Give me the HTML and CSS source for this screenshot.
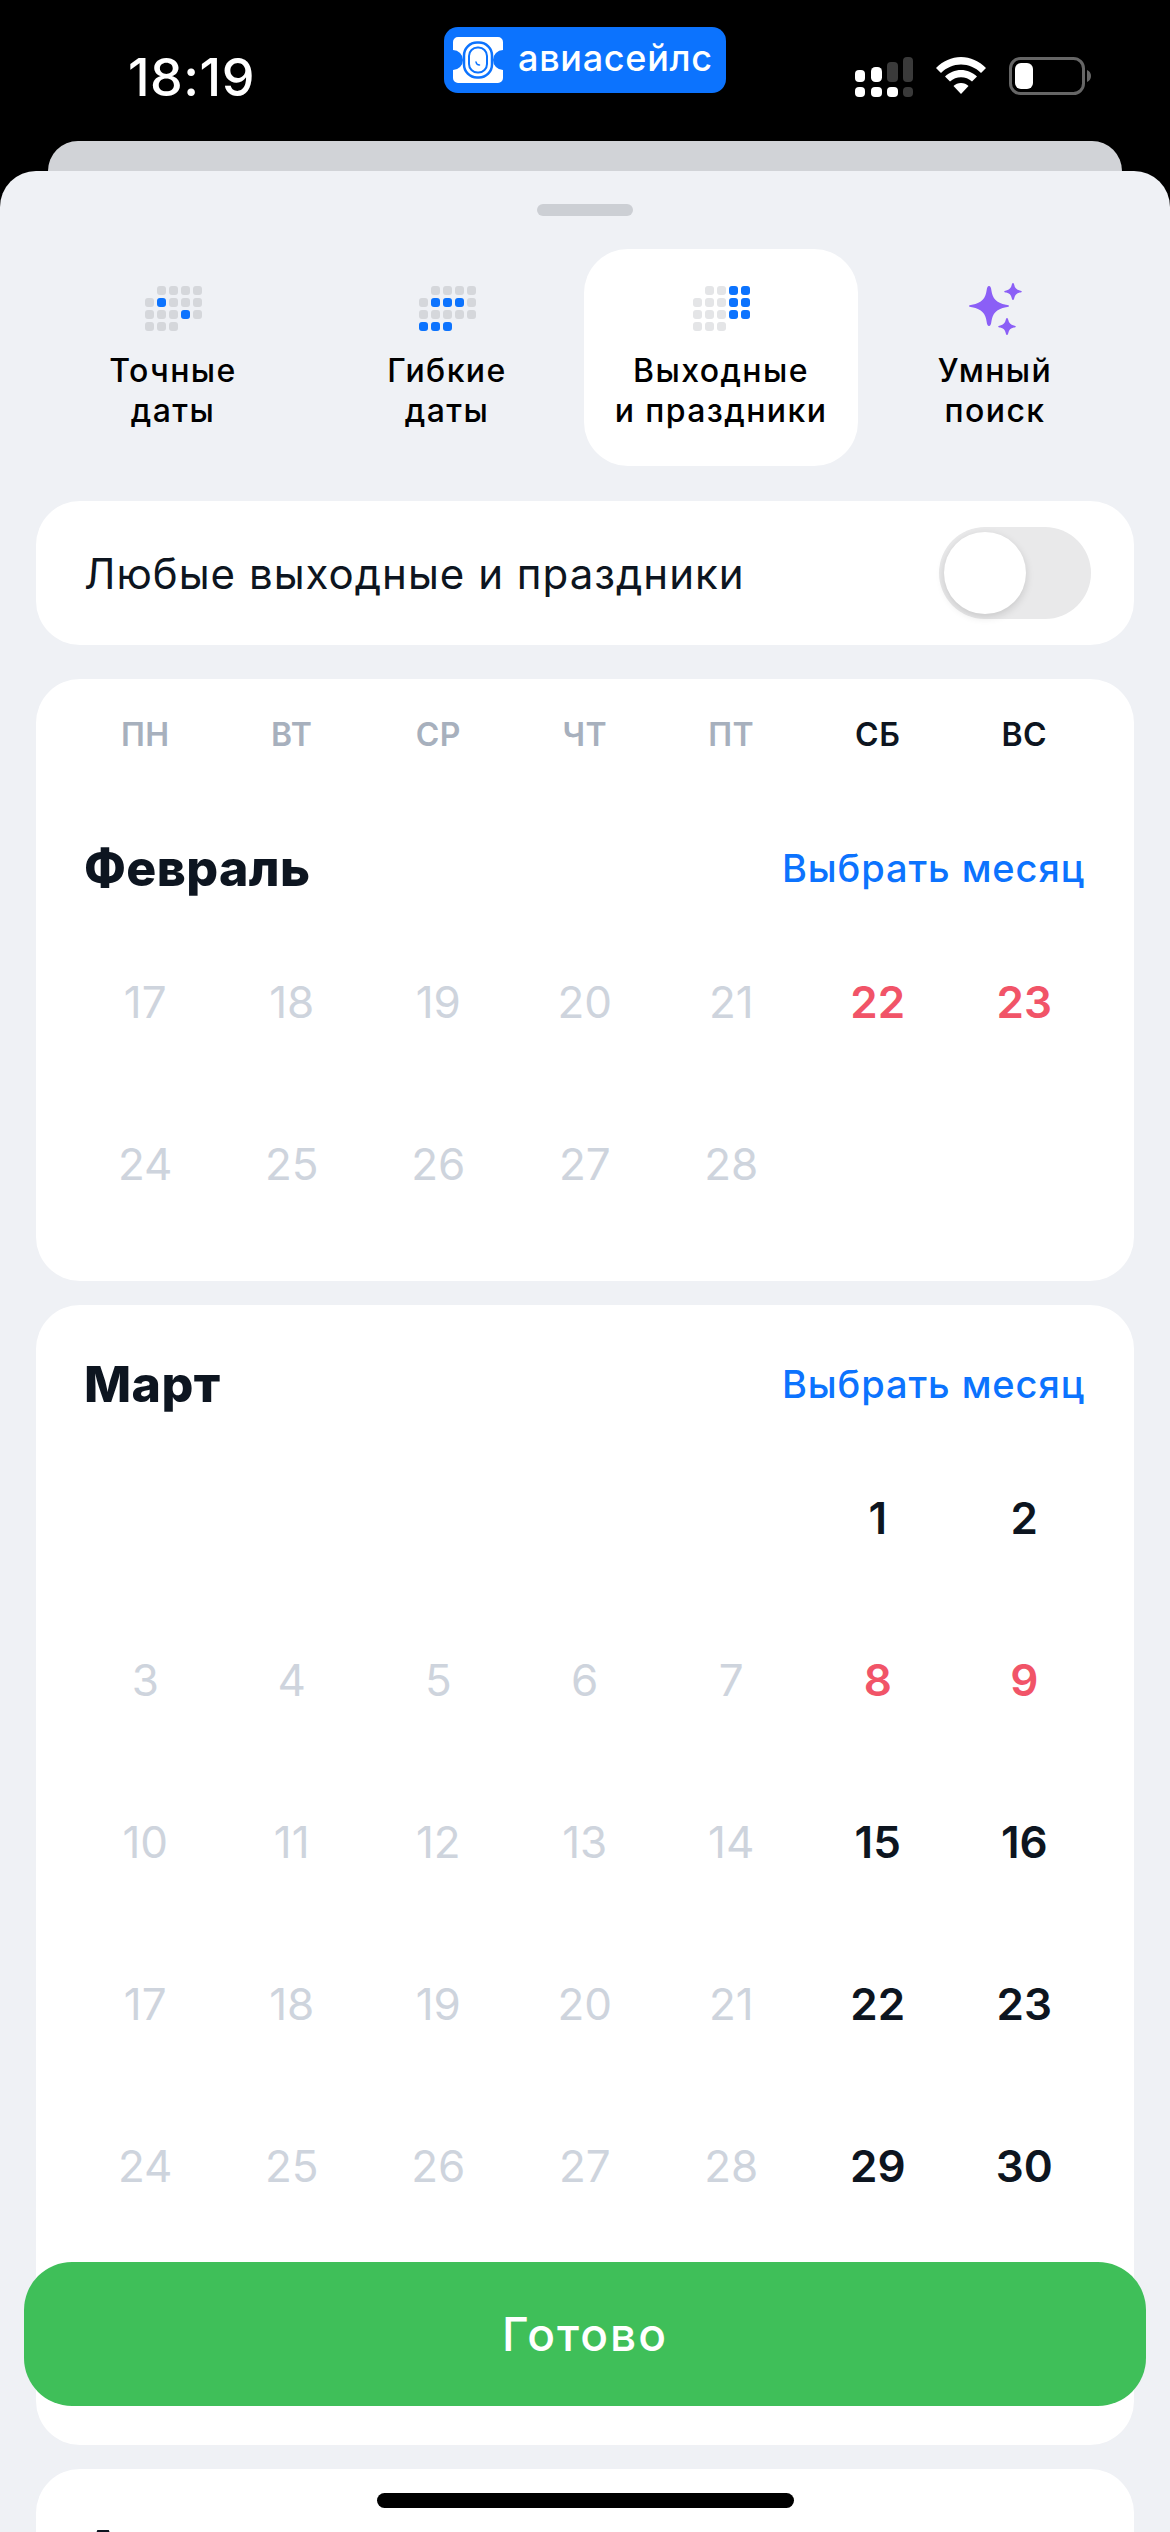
FILE: index.html
```html
<!DOCTYPE html>
<html lang="ru">

<head>
    <meta charset="UTF-8">
    <meta name="viewport" content="width=device-width, initial-scale=1.0">
    <title>Даты</title>
    <link rel="stylesheet" href="styles.css">
</head>

<body>
    <div class="phone">

        <!-- Статус-бар -->
        <div class="status-bar">
            <span class="clock">18:19</span>
            <div class="brand">
                <svg class="brand-logo" viewBox="0 0 50 46" width="50" height="46">
                    <path fill="#fff" d="M5 0H45a5 5 0 0 1 5 5V13a10 10 0 0 0 0 20V41a5 5 0 0 1-5 5H5a5 5 0 0 1-5-5V33a10 10 0 0 0 0-20V5a5 5 0 0 1 5-5Z" />
                    <rect x="11" y="5.500" width="28" height="35" rx="13" fill="none" stroke="#0c73fe" stroke-width="2.500" />
                    <rect x="16" y="10.500" width="18" height="25" rx="8.500" fill="none" stroke="#0c73fe" stroke-width="2" />
                    <path d="M23 25c.3 2 1.500 3 3.500 3" fill="none" stroke="#0c73fe" stroke-width="1.500" stroke-linecap="round" />
                </svg>
                <span class="brand-name">авиасейлс</span>
            </div>
            <div class="status-icons">
                <svg viewBox="0 0 58 40" width="58" height="40">
                    <rect x="0" y="13" width="10" height="12" rx="4" fill="#fff" />
                    <rect x="16" y="10" width="11" height="15" rx="4.500" fill="#fff" />
                    <rect x="32" y="5" width="11" height="20" rx="4" fill="#3a3a3a" />
                    <rect x="48" y="0" width="10" height="25" rx="4" fill="#3a3a3a" />
                    <rect x="0" y="30" width="10" height="10" rx="4" fill="#fff" />
                    <rect x="16" y="30" width="11" height="10" rx="4" fill="#fff" />
                    <rect x="32" y="30" width="11" height="10" rx="4" fill="#fff" />
                    <rect x="48" y="30" width="10" height="10" rx="4" fill="#3a3a3a" />
                </svg>
                <svg viewBox="0 0 50 37" width="50" height="37">
                    <path fill="#fff" d="M25 0C15.500 0 7 4 0 11l5 5c5.500-5.500 12.500-8.500 20-8.500S39.500 10.500 45 16l5-5C43 4 34.500 0 25 0Z" />
                    <path fill="#fff" d="M25 13c-6 0-11.500 2.500-16 6.500l5 5c3-2.800 7-4.300 11-4.300s8 1.500 11 4.300l5-5C36.500 15.500 31 13 25 13Z" />
                    <path fill="#fff" d="M25 26c-3 0-5.500 1-7.500 3L25 37l7.500-8c-2-2-4.500-3-7.500-3Z" />
                </svg>
                <svg viewBox="0 0 82 38" width="82" height="38">
                    <rect x="1.500" y="1.500" width="73" height="35" rx="10" fill="none" stroke="#666" stroke-width="3" />
                    <rect x="6" y="6" width="18" height="26" rx="6" fill="#fff" />
                    <path d="M78 13c2.500 1 4 3.300 4 6s-1.500 5-4 6Z" fill="#666" />
                </svg>
            </div>
        </div>

        <div class="sheet-back"></div>

        <div class="sheet">
            <div class="handle"></div>

            <!-- Вкладки -->
            <div class="tabs">
                <div class="tab">
                    <div class="dots">
                        <i class="none"></i><i></i><i></i><i></i><i></i>
                        <i></i><i class="on"></i><i></i><i></i><i></i>
                        <i></i><i></i><i></i><i class="on"></i><i></i>
                        <i></i><i></i><i></i>
                    </div>
                    <span>Точные<br>даты</span>
                </div>
                <div class="tab">
                    <div class="dots">
                        <i class="none"></i><i></i><i></i><i></i><i></i>
                        <i></i><i class="on"></i><i class="on"></i><i class="on"></i><i></i>
                        <i></i><i></i><i></i><i></i><i></i>
                        <i class="on"></i><i class="on"></i><i class="on"></i>
                    </div>
                    <span>Гибкие<br>даты</span>
                </div>
                <div class="tab active">
                    <div class="dots">
                        <i class="none"></i><i></i><i></i><i class="on"></i><i class="on"></i>
                        <i></i><i></i><i></i><i class="on"></i><i class="on"></i>
                        <i></i><i></i><i></i><i class="on"></i><i class="on"></i>
                        <i></i><i></i><i></i>
                    </div>
                    <span>Выходные<br>и праздники</span>
                </div>
                <div class="tab">
                    <svg class="sparkle" viewBox="0 0 56 48" width="56" height="48">
                        <path fill="#8b5ff6" d="M20 0c1.500 0 2 1.500 2.500 5 1 7 4.500 12 14.500 13.800 2 .4 3 .6 3 1.200s-1 .8-3 1.200C27 23 23.500 28 22.500 35c-.5 3.500-1 5-2.500 5s-2-1.500-2.500-5C16.500 28 13 23 3 21.200 1 20.800 0 20.600 0 20s1-.8 3-1.200C13 17 16.500 12 17.500 5 18 1.500 18.500 0 20 0Z" />
                        <path fill="#8b5ff6" d="M44 -3c.8 0 1 .8 1.300 2 .6 3 2.300 4.800 5.500 5.400 1.200.3 2 .5 2 1.100s-.8.8-2 1.100c-3.200.6-4.900 2.400-5.500 5.400-.3 1.200-.5 2-1.300 2s-1-.8-1.300-2c-.6-3-2.300-4.800-5.500-5.400-1.200-.3-2-.5-2-1.100s.8-.8 2-1.100c3.200-.6 4.900-2.400 5.500-5.400.3-1.200.5-2 1.300-2Z" transform="translate(0 0)" />
                        <path fill="#8b5ff6" d="M38 32c.8 0 1 .8 1.300 2 .6 3 2.300 4.800 5.500 5.400 1.200.3 2 .5 2 1.100s-.8.8-2 1.100c-3.200.6-4.900 2.400-5.500 5.400-.3 1.200-.5 2-1.300 2s-1-.8-1.300-2c-.6-3-2.300-4.800-5.500-5.400-1.200-.3-2-.5-2-1.100s.8-.8 2-1.100c3.200-.6 4.900-2.400 5.500-5.400.3-1.200.5-2 1.300-2Z" />
                    </svg>
                    <span>Умный<br>поиск</span>
                </div>
            </div>

            <!-- Переключатель -->
            <div class="card toggle-card">
                <span>Любые выходные и праздники</span>
                <div class="switch">
                    <div class="knob"></div>
                </div>
            </div>

            <!-- Февраль -->
            <div class="card month">
                <div class="weekdays">
                    <span>ПН</span><span>ВТ</span><span>СР</span><span>ЧТ</span><span>ПТ</span>
                    <span class="weekend">СБ</span><span class="weekend">ВС</span>
                </div>
                <div class="month-head first">
                    <h2>Февраль</h2>
                    <a>Выбрать месяц</a>
                </div>
                <div class="days">
                    <span>17</span><span>18</span><span>19</span><span>20</span><span>21</span>
                    <span class="holiday">22</span><span class="holiday">23</span>
                    <span>24</span><span>25</span><span>26</span><span>27</span><span>28</span>
                </div>
            </div>

            <!-- Март -->
            <div class="card month">
                <div class="month-head">
                    <h2>Март</h2>
                    <a>Выбрать месяц</a>
                </div>
                <div class="days">
                    <span></span><span></span><span></span><span></span><span></span>
                    <span class="free">1</span><span class="free">2</span>
                    <span>3</span><span>4</span><span>5</span><span>6</span><span>7</span>
                    <span class="holiday">8</span><span class="holiday">9</span>
                    <span>10</span><span>11</span><span>12</span><span>13</span><span>14</span>
                    <span class="free">15</span><span class="free">16</span>
                    <span>17</span><span>18</span><span>19</span><span>20</span><span>21</span>
                    <span class="free">22</span><span class="free">23</span>
                    <span>24</span><span>25</span><span>26</span><span>27</span><span>28</span>
                    <span class="free">29</span><span class="free">30</span>
                    <span>31</span>
                </div>
            </div>

            <!-- Апрель -->
            <div class="card month">
                <div class="month-head">
                    <h2>Апрель</h2>
                    <a>Выбрать месяц</a>
                </div>
            </div>
        </div>

        <button class="done">Готово</button>
        <div class="home-bar"></div>
    </div>
</body>

</html>
```

FILE: styles.css
```css
/* Общие стили */
body {
    margin: 0;
    font-family: Inter, "Noto Sans", sans-serif;
    color: #0d1520;
}

.phone {
    position: relative;
    width: 1170px;
    height: 2532px;
    overflow: hidden;
    background-color: #000;
    display: flex;
    flex-direction: column;
}

/* Статус-бар */
.status-bar {
    height: 141px;
    flex-shrink: 0;
    position: relative;
    display: flex;
    justify-content: space-between;
    padding: 0 79px 0 128px;
    box-sizing: border-box;
    color: #fff;
}

.clock {
    font-size: 52px;
    font-weight: 500;
    letter-spacing: 0.5px;
    line-height: 50px;
    margin-top: 53px;
}

.brand {
    position: absolute;
    left: 444px;
    top: 27px;
    width: 282px;
    height: 66px;
    box-sizing: border-box;
    padding-left: 9px;
    display: flex;
    align-items: center;
    gap: 15px;
    background-color: #0c73fe;
    border-radius: 14px;
}

.brand-name {
    font-size: 36px;
    font-weight: 500;
    letter-spacing: 0.7px;
    line-height: 40px;
    margin-top: -4px;
}

.status-icons {
    display: flex;
    align-items: flex-start;
    gap: 23px;
    margin-top: 57px;
}

/* Листы */
.sheet-back {
    height: 30px;
    flex-shrink: 0;
    margin: 0 48px;
    background-color: #d1d3d7;
    border-radius: 36px 36px 0 0;
}

.sheet {
    flex-grow: 1;
    min-height: 0;
    overflow: hidden;
    background-color: #eff1f5;
    border-radius: 36px 36px 0 0;
    padding: 33px 36px 0;
}

.handle {
    width: 96px;
    height: 12px;
    margin: 0 auto 33px;
    background-color: #cccfd4;
    border-radius: 6px;
}

/* Вкладки */
.tabs {
    display: grid;
    grid-template-columns: repeat(4, 274px);
    height: 217px;
    margin-bottom: 35px;
}

.tab {
    display: flex;
    flex-direction: column;
    align-items: center;
    padding-top: 37px;
    border-radius: 44px;
    font-size: 32px;
    font-weight: 500;
    line-height: 40px;
    letter-spacing: 1.4px;
    text-align: center;
    color: #000;
}

.tab.active {
    background-color: #fff;
}

.dots {
    display: grid;
    grid-template-columns: repeat(5, 9px);
    grid-auto-rows: 9px;
    gap: 3px;
    height: 45px;
    margin-bottom: 20px;
}

.dots i {
    background-color: #d5d7db;
    border-radius: 3px;
}

.dots i.none {
    background: none;
}

.active .dots i {
    background-color: #e4e5e7;
}

.dots i.on,
.active .dots i.on {
    background-color: #0c73fe;
}

.active .dots i.none {
    background: none;
}

.sparkle {
    display: block;
    margin: 0 0 17px 3px;
    overflow: visible;
}

/* Карточки */
.card {
    background-color: #fff;
    border-radius: 44px;
    margin-bottom: 24px;
}

.toggle-card {
    height: 144px;
    margin-bottom: 34px;
    box-sizing: border-box;
    padding: 0 43px 0 48px;
    display: flex;
    align-items: center;
    justify-content: space-between;
    font-size: 42px;
    letter-spacing: 1px;
}

.switch {
    width: 152px;
    height: 92px;
    padding: 5px;
    box-sizing: border-box;
    background-color: #e9e9ea;
    border-radius: 46px;
}

.knob {
    width: 82px;
    height: 82px;
    background-color: #fff;
    border-radius: 50%;
    box-shadow: 0 3px 8px rgba(0, 0, 0, 0.14);
}

/* Месяц */
.weekdays,
.days {
    display: grid;
    grid-template-columns: repeat(7, 146.5px);
    padding: 0 36px;
    text-align: center;
}

.weekdays {
    height: 110px;
    align-items: center;
    font-size: 32px;
    font-weight: 600;
    letter-spacing: 0.5px;
    color: #a7b0bd;
}

.weekdays .weekend {
    color: #0d1520;
}

.month-head {
    height: 106px;
    padding: 26px 49px 0 48px;
    display: flex;
    align-items: center;
    justify-content: space-between;
}

.month-head.first {
    padding-top: 0;
    margin-top: 26px;
}

.month-head h2 {
    margin: 0;
    font-size: 50px;
    font-weight: 800;
    letter-spacing: 0.4px;
}

.month-head a {
    font-size: 38px;
    font-weight: 500;
    letter-spacing: 0.9px;
    color: #0c73fe;
}

.days {
    grid-auto-rows: 162px;
    align-items: center;
    padding-bottom: 36px;
    font-size: 44px;
    color: #ced4dd;
}

.days .holiday {
    color: #f15468;
    font-weight: 600;
}

.days .free {
    color: #0d1520;
    font-weight: 600;
}

/* Кнопка и индикатор поверх контента */
.done {
    position: absolute;
    left: 24px;
    top: 2262px;
    width: 1122px;
    height: 144px;
    border: none;
    border-radius: 48px;
    background-color: #3fbf59;
    color: #fff;
    font-family: inherit;
    font-size: 46px;
    font-weight: 500;
    letter-spacing: 2px;
}

.home-bar {
    position: absolute;
    left: 377px;
    top: 2493px;
    width: 417px;
    height: 15px;
    background-color: #000;
    border-radius: 8px;
}
```
